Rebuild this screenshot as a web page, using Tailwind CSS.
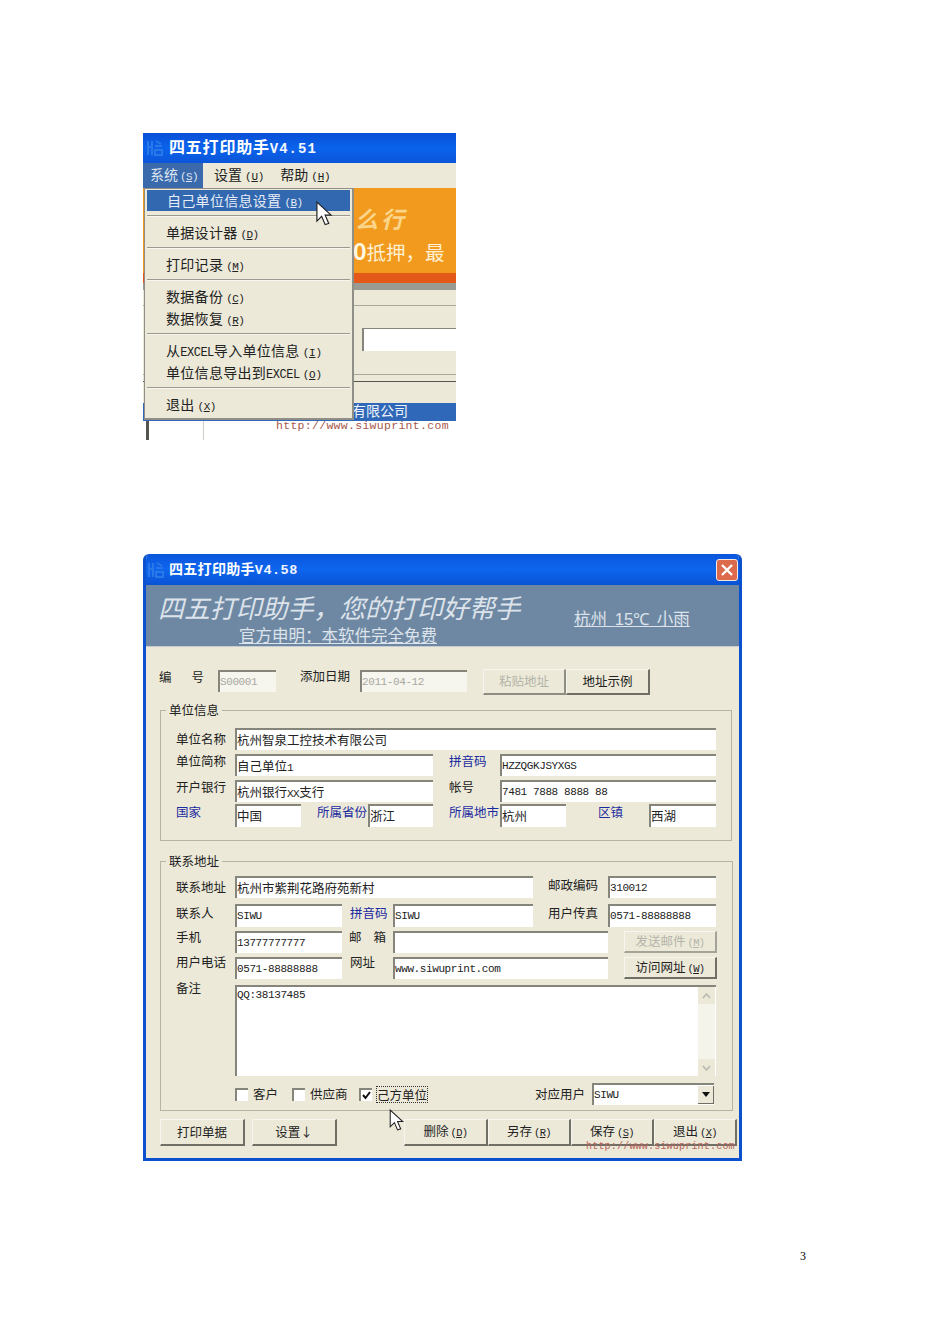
<!DOCTYPE html>
<html lang="zh"><head><meta charset="utf-8"><title>四五打印助手</title>
<script src="https://cdn.jsdelivr.net/npm/@tailwindcss/browser@4"></script></head>
<body class="bg-white font-['Noto_Sans_CJK_SC',sans-serif] text-[#222]">
<main class="relative w-[950px] h-[1344px] pt-[133px] pl-[143px]">

<!-- first screenshot -->
<section class="relative w-[313px] h-[307px] overflow-hidden bg-[#ece9d8]">
  <div class="h-[30px] flex items-center bg-gradient-to-b from-[#0a4fd6] via-[#0a63ec] to-[#0b55d8]">
    <svg class="w-[18px] h-[20px] ml-[2px]" viewBox="0 0 18 20"><path d="M3 3v14M7 3v14M3 9h4M11 3l5 3M10 8h7M10 12h7v5h-7z" fill="none" stroke="#2a78e8" stroke-width="2"/></svg>
    <p class="ml-[6px] -mt-[2px] text-[16px] font-bold text-white tracking-[0.8px] whitespace-nowrap">四五打印助手<span class="font-['Liberation_Mono'] text-[14px] tracking-[1px] text-[#f2f6ff]">V4.51</span></p>
  </div>
  <nav class="h-[25px] flex items-center text-[14px] leading-[20px] bg-[#ece9d8]">
    <span class="w-[60px] h-full pl-[7px] pt-[1px] bg-[#3a69ac] text-[#dfe7f2] whitespace-nowrap">系统<span class="font-['Liberation_Mono'] text-[11px] ml-[2px] tracking-[-0.6px]">(<u>S</u>)</span></span>
    <span class="ml-[11px] -mt-[1px] whitespace-nowrap">设置<span class="font-['Liberation_Mono'] text-[11px] ml-[3px] tracking-[-0.2px]">(<u>U</u>)</span></span>
    <span class="ml-[16px] -mt-[1px] whitespace-nowrap">帮助<span class="font-['Liberation_Mono'] text-[11px] ml-[3px] tracking-[-0.2px]">(<u>H</u>)</span></span>
  </nav>
  <div class="h-[85px] bg-[#f19a1e] pl-[212px] pt-[14px] overflow-hidden">
    <p class="text-[23px] font-bold leading-[32px] tracking-[3px] italic text-[#fbd58a] whitespace-nowrap">么行</p>
    <p class="text-[19.5px] leading-[32px] -ml-[2px] whitespace-nowrap text-[#fff0d2]"><span class="font-bold text-[23px] text-[#fff6e2]">0</span>抵押，最</p>
  </div>
  <div class="h-[10px] bg-[#e4581a]"></div>
  <div class="h-[7px] bg-[#9a9a94]"></div>
  <div class="h-[16px] border-b border-[#a9a89c]"></div>
  <div class="h-[45px] pt-[22px] pl-[219px]">
    <div class="h-[23px] bg-white border-l-2 border-t border-[#85857c]"></div>
  </div>
  <div class="h-[24px] border-b border-[#a9a89c]"></div>
  <div class="h-[7px] border-b border-[#55554f]"></div>
  <div class="h-[21px]"></div>
  <div class="h-[18px] bg-[#2f68b8] pl-[209px] text-[14px] leading-[14px] text-[#f0f4fa]">有限公司</div>
  <div class="h-[19px] bg-white flex">
    <div class="w-[3px] ml-[3px] bg-[#55554f]"></div>
    <div class="w-[55px] border-r border-[#cfcfc8]"></div>
  </div>
  <span class="absolute left-[133px] top-[286px] font-['Liberation_Mono'] text-[11.5px] leading-[14px] tracking-[0.3px] text-[#a8584c] whitespace-nowrap">http://www.siwuprint.com</span>

  <!-- dropdown menu -->
  <div class="absolute left-[1px] top-[55px] w-[210px] h-[232px] bg-[#ece9d8] border border-[#8f8f88] border-r-2 border-b-2 px-[2px] py-[1px] text-[14px] leading-[21px] tracking-[0.3px] whitespace-nowrap">
    <div class="h-[21px] bg-[#3268b0] text-[#e6edf6] pl-[20px]">自己单位信息设置<span class="font-['Liberation_Mono'] text-[11px] ml-[3px] tracking-[-0.6px]">(<u>B</u>)</span></div>
    <div class="h-[2px] mt-[4px] border-t border-t-[#9a9a92] border-b border-b-[#f6f5ee]"></div>
    <div class="h-[21px] mt-[5px] pl-[19px]">单据设计器<span class="font-['Liberation_Mono'] text-[11px] ml-[3px] tracking-[-0.6px]">(<u>D</u>)</span></div>
    <div class="h-[2px] mt-[4px] border-t border-t-[#9a9a92] border-b border-b-[#f6f5ee]"></div>
    <div class="h-[21px] mt-[5px] pl-[19px]">打印记录<span class="font-['Liberation_Mono'] text-[11px] ml-[3px] tracking-[-0.6px]">(<u>M</u>)</span></div>
    <div class="h-[2px] mt-[4px] border-t border-t-[#9a9a92] border-b border-b-[#f6f5ee]"></div>
    <div class="h-[21px] mt-[5px] pl-[19px]">数据备份<span class="font-['Liberation_Mono'] text-[11px] ml-[3px] tracking-[-0.6px]">(<u>C</u>)</span></div>
    <div class="h-[21px] mt-[1px] pl-[19px]">数据恢复<span class="font-['Liberation_Mono'] text-[11px] ml-[3px] tracking-[-0.6px]">(<u>R</u>)</span></div>
    <div class="h-[2px] mt-[4px] border-t border-t-[#9a9a92] border-b border-b-[#f6f5ee]"></div>
    <div class="h-[21px] mt-[5px] pl-[19px]">从<span class="font-['Liberation_Mono'] text-[12px] tracking-[-0.5px]">EXCEL</span>导入单位信息<span class="font-['Liberation_Mono'] text-[11px] ml-[3px] tracking-[-0.2px]">(<u>I</u>)</span></div>
    <div class="h-[21px] mt-[1px] pl-[19px]">单位信息导出到<span class="font-['Liberation_Mono'] text-[12px] tracking-[-0.5px]">EXCEL</span><span class="font-['Liberation_Mono'] text-[11px] ml-[3px] tracking-[-0.2px]">(<u>O</u>)</span></div>
    <div class="h-[2px] mt-[4px] border-t border-t-[#9a9a92] border-b border-b-[#f6f5ee]"></div>
    <div class="h-[21px] mt-[5px] pl-[19px]">退出<span class="font-['Liberation_Mono'] text-[11px] ml-[3px] tracking-[-0.6px]">(<u>X</u>)</span></div>
  </div>
  <svg class="absolute left-[172px] top-[68px] w-[18px] h-[26px]" viewBox="0 0 14 22"><path d="M1 1v16l4-4 3 7 3-1-3-7h5z" fill="#fff" stroke="#222" stroke-width="1"/></svg>
</section>

<!-- second screenshot -->
<section class="relative w-[599px] h-[607px] mt-[114px] bg-[#ece9d8] border-x-[3px] border-b-[3px] border-[#0b50cc] rounded-t-[6px] overflow-hidden">
  <div class="h-[31px] -mx-[3px] flex items-center bg-gradient-to-b from-[#0a56dc] via-[#0d66ee] to-[#0a52d4]">
    <svg class="w-[18px] h-[20px] ml-[3px]" viewBox="0 0 18 20"><path d="M3 3v14M7 3v14M3 9h4M11 3l5 3M10 8h7M10 12h7v5h-7z" fill="none" stroke="#2a78e8" stroke-width="2"/></svg>
    <p class="ml-[5px] text-[14px] font-bold text-white tracking-[0.3px] whitespace-nowrap">四五打印助手<span class="font-['Liberation_Mono'] text-[13.5px] tracking-[0.5px] text-[#f2f6ff]">V4.58</span></p>
    <span class="ml-auto mr-[4px] w-[22px] h-[22px] rounded-[3px] border border-[#f4e7e0] bg-[#dc6a4c] flex items-center justify-center">
      <svg class="w-[14px] h-[14px]" viewBox="0 0 14 14"><path d="M2 2l10 10M12 2L2 12" stroke="#fff" stroke-width="2.4"/></svg>
    </span>
  </div>
  <header class="h-[62px] bg-[#6e88a4] text-[#dde3ea] relative border-b border-[#c5ccd2]">
    <p class="pl-[12px] pt-[4px] text-[25.9px] leading-[36px] italic whitespace-nowrap">四五打印助手，您的打印好帮手</p>
    <p class="pl-[93px] text-[16.5px] leading-[20px] underline whitespace-nowrap">官方申明：本软件完全免费</p>
    <p class="absolute left-[428px] top-[22px] text-[16.5px] leading-[22px] underline whitespace-pre [word-spacing:4px]">杭州 <span class="font-['Liberation_Sans']">15℃</span> 小雨</p>
  </header>

  <div class="text-[12.5px]">
    <!-- number row -->
    <div class="flex h-[26px] mt-[22px] pl-[13px] items-start">
      <span class="w-[59px] flex justify-between pr-[14px] leading-[14px] mt-px"><span>编</span><span>号</span></span>
      <div class="w-[58px] h-[22px] mt-[1px] border-t-2 border-l-2 border-[#85857c] bg-[#f6f5ee] flex items-center font-['Liberation_Mono'] text-[11px] tracking-[-0.4px] text-[#a9a9a0]">S00001</div>
      <span class="ml-[24px] w-[60px] leading-[14px]">添加日期</span>
      <div class="w-[107px] h-[22px] mt-[1px] border-t-2 border-l-2 border-[#85857c] bg-[#f6f5ee] flex items-center font-['Liberation_Mono'] text-[11px] tracking-[-0.4px] text-[#a9a9a0]">2011-04-12</div>
      <div class="ml-[16px] w-[83px] h-[26px] border border-[#f6f5ee] border-r-2 border-b-2 border-r-[#8d8d84] border-b-[#8d8d84] flex items-center justify-center text-[#b4b4aa]">粘贴地址</div>
      <div class="w-[84px] h-[26px] border border-[#f6f5ee] border-r-2 border-b-2 border-r-[#6f6f66] border-b-[#6f6f66] flex items-center justify-center">地址示例</div>
    </div>

    <fieldset class="ml-[14px] mt-[8px] w-[571px] h-[138px] border border-[#b5b4a5] px-[15px]">
      <legend class="-ml-[10px] px-[3px] leading-[14px]">单位信息</legend>
      <div class="flex h-[22px] mt-[11px]">
        <span class="w-[59px] leading-[14px] mt-[4px]">单位名称</span>
        <div class="w-[481px] bg-white border-t-2 border-l-2 border-[#85857c] flex items-center">杭州智泉工控技术有限公司</div>
      </div>
      <div class="flex h-[22px] mt-[4px]">
        <span class="w-[59px] leading-[14px]">单位简称</span>
        <div class="w-[198px] bg-white border-t-2 border-l-2 border-[#85857c] leading-[19px]">自己单位<span class="font-['Liberation_Mono'] text-[11px]">1</span></div>
        <span class="ml-[16px] w-[51px] leading-[14px] text-[#1a2aa0]">拼音码</span>
        <div class="w-[216px] bg-white border-t-2 border-l-2 border-[#85857c] flex items-center font-['Liberation_Mono'] text-[11px] tracking-[-0.4px]">HZZQGKJSYXGS</div>
      </div>
      <div class="flex h-[22px] mt-[4px]">
        <span class="w-[59px] leading-[14px]">开户银行</span>
        <div class="w-[198px] bg-white border-t-2 border-l-2 border-[#85857c] leading-[19px]">杭州银行<span class="font-['Liberation_Mono'] text-[11px] tracking-[-0.5px]">XX</span>支行</div>
        <span class="ml-[16px] w-[51px] leading-[14px]">帐号</span>
        <div class="w-[216px] bg-white border-t-2 border-l-2 border-[#85857c] flex items-center font-['Liberation_Mono'] text-[11px] tracking-[-0.4px] whitespace-pre">7481 7888 8888 88</div>
      </div>
      <div class="flex h-[23px] mt-[2px]">
        <span class="w-[59px] leading-[14px] mt-px text-[#1a2aa0]">国家</span>
        <div class="w-[66px] bg-white border-t-2 border-l-2 border-[#85857c] flex items-center">中国</div>
        <span class="ml-[16px] w-[51px] leading-[14px] mt-px text-[#1a2aa0] whitespace-nowrap">所属省份</span>
        <div class="w-[65px] bg-white border-t-2 border-l-2 border-[#85857c] flex items-center">浙江</div>
        <span class="ml-[16px] w-[51px] leading-[14px] mt-px text-[#1a2aa0] whitespace-nowrap">所属地市</span>
        <div class="w-[66px] bg-white border-t-2 border-l-2 border-[#85857c] flex items-center">杭州</div>
        <span class="ml-[32px] w-[51px] leading-[14px] mt-px text-[#1a2aa0]">区镇</span>
        <div class="w-[67px] bg-white border-t-2 border-l-2 border-[#85857c] flex items-center">西湖</div>
      </div>
    </fieldset>

    <fieldset class="ml-[14px] mt-[13px] w-[571px] h-[257px] border border-[#b5b4a5] px-[15px]">
      <legend class="-ml-[10px] px-[3px] leading-[14px]">联系地址</legend>
      <div class="flex h-[22px] mt-[8px]">
        <span class="w-[59px] leading-[14px] mt-[4px]">联系地址</span>
        <div class="w-[298px] bg-white border-t-2 border-l-2 border-[#85857c] flex items-center">杭州市紫荆花路府苑新村</div>
        <span class="ml-[15px] w-[60px] leading-[14px] mt-[2px]">邮政编码</span>
        <div class="w-[108px] bg-white border-t-2 border-l-2 border-[#85857c] flex items-center font-['Liberation_Mono'] text-[11px] tracking-[-0.4px]">310012</div>
      </div>
      <div class="flex h-[23px] mt-[6px]">
        <span class="w-[59px] leading-[14px] mt-[2px]">联系人</span>
        <div class="w-[107px] bg-white border-t-2 border-l-2 border-[#85857c] flex items-center font-['Liberation_Mono'] text-[11px] tracking-[-0.4px]">SIWU</div>
        <span class="ml-[8px] w-[43px] leading-[14px] mt-[2px] text-[#1a2aa0] whitespace-nowrap">拼音码</span>
        <div class="w-[140px] bg-white border-t-2 border-l-2 border-[#85857c] flex items-center font-['Liberation_Mono'] text-[11px] tracking-[-0.4px]">SIWU</div>
        <span class="ml-[15px] w-[60px] leading-[14px] mt-[2px]">用户传真</span>
        <div class="w-[108px] bg-white border-t-2 border-l-2 border-[#85857c] flex items-center font-['Liberation_Mono'] text-[11px] tracking-[-0.4px]">0571-88888888</div>
      </div>
      <div class="flex h-[22px] mt-[4px]">
        <span class="w-[59px] leading-[14px] -mt-px">手机</span>
        <div class="w-[107px] bg-white border-t-2 border-l-2 border-[#85857c] flex items-center font-['Liberation_Mono'] text-[11px] tracking-[-0.4px]">13777777777</div>
        <span class="ml-[7px] w-[44px] pr-[7px] leading-[14px] -mt-px flex justify-between"><span>邮</span><span>箱</span></span>
        <div class="w-[215px] bg-white border-t-2 border-l-2 border-[#85857c]"></div>
        <div class="ml-[16px] w-[93px] border border-[#f6f5ee] border-r-2 border-b-2 border-r-[#a3a398] border-b-[#a3a398] flex items-center justify-center text-[#b4b4aa]"><span>发送邮件<span class="font-['Liberation_Mono'] text-[10.5px] ml-[2px] tracking-[-0.6px]">(<u>M</u>)</span></span></div>
      </div>
      <div class="flex h-[22px] mt-[4px]">
        <span class="w-[59px] leading-[14px] -mt-[2px]">用户电话</span>
        <div class="w-[107px] bg-white border-t-2 border-l-2 border-[#85857c] flex items-center font-['Liberation_Mono'] text-[11px] tracking-[-0.4px]">0571-88888888</div>
        <span class="ml-[8px] w-[43px] leading-[14px] -mt-[2px]">网址</span>
        <div class="w-[215px] bg-white border-t-2 border-l-2 border-[#85857c] flex items-center font-['Liberation_Mono'] text-[11px] tracking-[-0.4px]">www.siwuprint.com</div>
        <div class="ml-[16px] w-[93px] border border-[#f6f5ee] border-r-2 border-b-2 border-r-[#6f6f66] border-b-[#6f6f66] flex items-center justify-center"><span>访问网址<span class="font-['Liberation_Mono'] text-[10.5px] ml-[2px] tracking-[-0.6px]">(<u>W</u>)</span></span></div>
      </div>
      <div class="flex h-[91px] mt-[6px]">
        <span class="w-[59px] leading-[14px] -mt-[4px]">备注</span>
        <div class="w-[481px] relative bg-white border-t-2 border-l-2 border-[#85857c] pt-[1px] font-['Liberation_Mono'] text-[11px] tracking-[-0.4px] leading-[14px]">QQ:38137485
          <div class="absolute right-[1px] top-0 bottom-0 w-[17px] bg-[#f5f4ea] flex flex-col justify-between">
            <span class="h-[17px] bg-[#ece9d8] flex items-center justify-center"><svg class="w-[9px] h-[6px]" viewBox="0 0 9 6"><path d="M1 5l3.5-4L8 5" fill="none" stroke="#b8b8ae" stroke-width="1.6"/></svg></span>
            <span class="h-[17px] bg-[#ece9d8] flex items-center justify-center"><svg class="w-[9px] h-[6px]" viewBox="0 0 9 6"><path d="M1 1l3.5 4L8 1" fill="none" stroke="#b8b8ae" stroke-width="1.6"/></svg></span>
          </div>
        </div>
      </div>
      <div class="flex h-[22px] mt-[7px] pl-[59px] items-center">
        <span class="w-[13px] h-[13px] bg-white border-t-2 border-l-2 border-[#85857c]"></span>
        <span class="ml-[5px] w-[39px]">客户</span>
        <span class="w-[13px] h-[13px] bg-white border-t-2 border-l-2 border-[#85857c]"></span>
        <span class="ml-[5px] w-[49px] whitespace-nowrap">供应商</span>
        <span class="w-[13px] h-[13px] bg-white border-t-2 border-l-2 border-[#85857c] flex items-center justify-center"><svg class="w-[9px] h-[9px]" viewBox="0 0 9 9"><path d="M1 4l2.5 3L8 1" fill="none" stroke="#111" stroke-width="2"/></svg></span>
        <span class="ml-[4px] border border-dotted border-[#333] leading-[15px] whitespace-nowrap">己方单位</span>
        <span class="ml-[107px] w-[57px] whitespace-nowrap">对应用户</span>
        <div class="w-[122px] h-[22px] bg-white border-t-2 border-l-2 border-[#85857c] flex items-center font-['Liberation_Mono'] text-[11px] tracking-[-0.4px]">SIWU
          <span class="ml-auto w-[16px] h-[18px] bg-[#ece9d8] border-r border-b border-[#6f6f66] flex items-center justify-center"><svg class="w-[8px] h-[5px]" viewBox="0 0 8 5"><path d="M0 0h8L4 5z" fill="#111"/></svg></span>
        </div>
      </div>
    </fieldset>

    <!-- bottom buttons -->
    <div class="flex h-[27px] mt-[8px] pl-[14px]">
      <div class="w-[85px] border border-[#f6f5ee] border-r-2 border-b-2 border-r-[#6f6f66] border-b-[#6f6f66] flex items-center justify-center">打印单据</div>
      <div class="ml-[7px] w-[85px] border border-[#f6f5ee] border-r-2 border-b-2 border-r-[#6f6f66] border-b-[#6f6f66] flex items-center justify-center">设置↓</div>
      <div class="ml-[67px] w-[84px] border border-[#f6f5ee] border-r-2 border-b-2 border-r-[#6f6f66] border-b-[#6f6f66] flex items-center justify-center"><span>删除<span class="font-['Liberation_Mono'] text-[10.5px] ml-[2px] tracking-[-0.6px]">(<u>D</u>)</span></span></div>
      <div class="w-[83px] border border-[#f6f5ee] border-r-2 border-b-2 border-r-[#6f6f66] border-b-[#6f6f66] flex items-center justify-center"><span>另存<span class="font-['Liberation_Mono'] text-[10.5px] ml-[2px] tracking-[-0.6px]">(<u>R</u>)</span></span></div>
      <div class="w-[83px] border border-[#f6f5ee] border-r-2 border-b-2 border-r-[#6f6f66] border-b-[#6f6f66] flex items-center justify-center"><span>保存<span class="font-['Liberation_Mono'] text-[10.5px] ml-[2px] tracking-[-0.6px]">(<u>S</u>)</span></span></div>
      <div class="w-[83px] border border-[#f6f5ee] border-r-2 border-b-2 border-r-[#6f6f66] border-b-[#6f6f66] flex items-center justify-center"><span>退出<span class="font-['Liberation_Mono'] text-[10.5px] ml-[2px] tracking-[-0.6px]">(<u>X</u>)</span></span></div>
    </div>
  </div>
  <span class="absolute left-[440px] top-[587px] font-['Liberation_Mono'] text-[10px] tracking-[0.2px] leading-[12px] text-[#b8645a] whitespace-nowrap">http://www.siwuprint.com</span>
  <svg class="absolute left-[243px] top-[555px] w-[15px] h-[23px]" viewBox="0 0 14 22"><path d="M1 1v16l4-4 3 7 3-1-3-7h5z" fill="#fff" stroke="#222" stroke-width="1"/></svg>
</section>

<p class="absolute left-[800px] top-[1249px] font-['Liberation_Serif'] text-[12px] leading-[14px] text-black">3</p>
</main>
</body></html>
